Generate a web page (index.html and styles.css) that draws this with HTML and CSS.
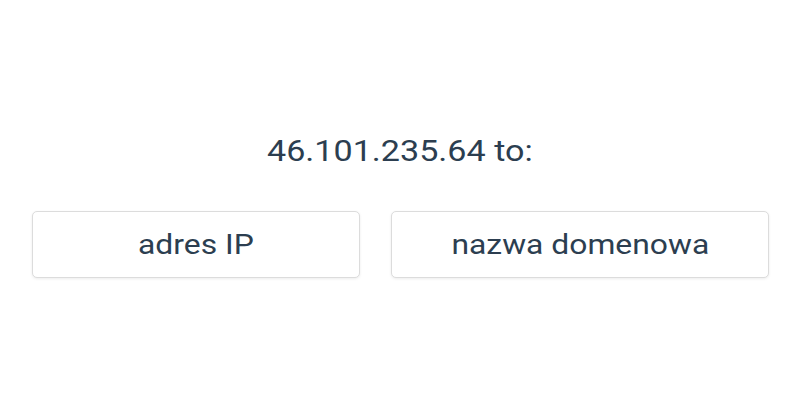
FILE: index.html
```html
<!DOCTYPE html>
<html lang="pl">
<head>
<meta charset="utf-8">
<link rel="stylesheet" href="styles.css">
</head>
<body>
<main class="quiz">
  <h1 class="question"><span class="wide">46.101.235.64 to:</span></h1>
  <div class="answers">
    <button class="answer answer-ip"><span class="wide">adres IP</span></button>
    <button class="answer answer-domain"><span class="wide">nazwa domenowa</span></button>
  </div>
</main>
</body>
</html>
```

FILE: styles.css
```css
html, body {
  margin: 0;
  padding: 0;
  background: #ffffff;
}
body {
  font-family: Roboto, "Liberation Sans", sans-serif;
  color: #2c3e50;
}
.quiz {
  height: 400px;
  box-sizing: border-box;
  padding-top: 131px;
  display: flex;
  flex-direction: column;
  align-items: center;
}
.wide {
  display: inline-block;
  transform: scaleX(1.137);
  transform-origin: center;
}
.question {
  margin: 0;
  font-size: 30px;
  font-weight: 400;
  line-height: 40px;
  height: 40px;
}
.answers {
  margin-top: 40px;
  display: grid;
  grid-template-columns: 328px 378px;
  column-gap: 31px;
  padding-left: 1px;
}
.answer {
  height: 67px;
  background: #ffffff;
  border: 1px solid #dcdcdc;
  border-radius: 5px;
  box-shadow: 0 1px 3px rgba(0, 0, 0, 0.08);
  font-family: Roboto, "Liberation Sans", sans-serif;
  font-size: 28px;
  color: #2c3e50;
  padding: 0;
  cursor: pointer;
}
```
